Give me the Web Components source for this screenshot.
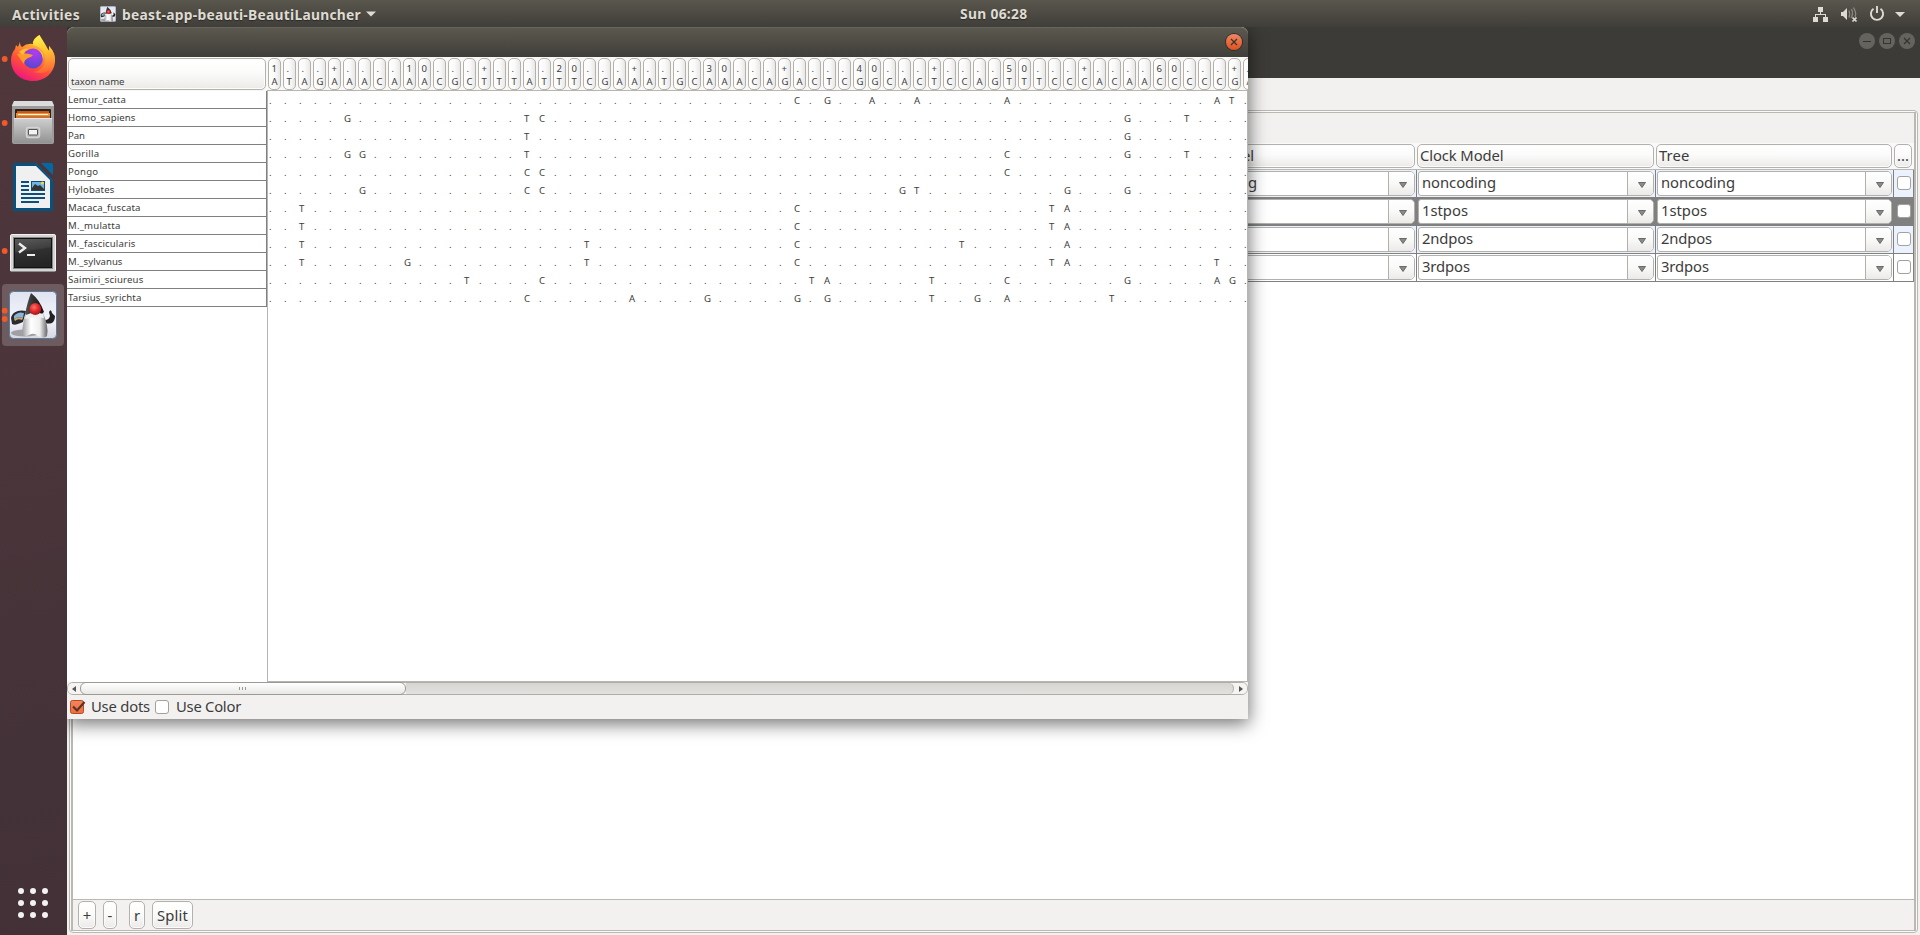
<!DOCTYPE html>
<html lang="en">
<head>
<meta charset="utf-8">
<title>BEAUti</title>
<style>
html,body{margin:0;height:100%;overflow:hidden}
body{font-family:"Noto Sans","Open Sans",sans-serif;color:#3c3c3c;background:#3c3b37}
</style>
</head>
<body>
<desktop-shell></desktop-shell>
<script>
function define(name, html, setup){
  const t=document.createElement('template'); t.innerHTML=html;
  customElements.define(name, class extends HTMLElement{
    constructor(){super(); this.attachShadow({mode:'open'});}
    connectedCallback(){
      if(this.shadowRoot.childNodes.length) return;
      const c=t.content.cloneNode(true);
      if(setup) setup(this,c);
      this.shadowRoot.append(c);
    }
  });
}

/* A label whose tracking is adjusted so the text spans w pixels. */
customElements.define('ui-label', class extends HTMLElement{
  connectedCallback(){
    if(this.shadowRoot) return;
    const r=this.attachShadow({mode:'open'});
    r.innerHTML='<style>:host{display:inline-block;white-space:pre}</style><span><slot></slot></span>';
    const s=r.querySelector('span'), w=+this.getAttribute('w'), n=this.textContent.length;
    if(w){ const nat=s.getBoundingClientRect().width; s.style.letterSpacing=((w-nat)/n).toFixed(3)+'px'; }
  }
});

define('duke-icon', `<style>:host{display:block}svg{display:block;width:100%;height:100%}</style>
<svg viewBox="0 0 48 48">
<defs><linearGradient id="b" x2="0" y2="1"><stop stop-color="#dfe2f0"/><stop offset=".6" stop-color="#f4f5fb"/><stop offset="1" stop-color="#d5d6e2"/></linearGradient>
<linearGradient id="w" x2="1"><stop stop-color="#999"/><stop offset=".35" stop-color="#fff"/><stop offset=".7" stop-color="#eee"/><stop offset="1" stop-color="#666"/></linearGradient>
<radialGradient id="n" cx=".4" cy=".35" r=".75"><stop stop-color="#ff7068"/><stop offset=".5" stop-color="#e0282b"/><stop offset="1" stop-color="#9c1215"/></radialGradient>
<linearGradient id="k" x2="1"><stop stop-color="#555"/><stop offset=".4" stop-color="#333"/><stop offset="1" stop-color="#111"/></linearGradient></defs>
<rect x=".5" y=".5" width="47" height="47" rx="4" fill="url(#b)" stroke="#587d9c"/>
<ellipse cx="16" cy="42" rx="14" ry="3.500" fill="#777" opacity=".6"/>
<path d="M17 20C10 18 3 21 2 27L3 33C7 35 11 32 14 31Z" fill="#2b2b2d"/>
<path d="M5 25Q9 20 15 22L14 27Q9 25 5 28Z" fill="#87b6dc"/><path d="M5 28Q9 25 14 27L13 29Q9 27 6 30Z" fill="#c9a677"/>
<path d="M36 29Q40 29 41 25L40 21Q42 17 43 22L46 25Q46 30 43 32Q39 33 37 32Z" fill="#222"/>
<path d="M17 22Q14 30 13 42Q15 47 20 44Q25 41 29 45Q35 48 38 45Q40 35 34 22Z" fill="url(#w)"/>
<path d="M22 2Q19 9 16 23Q19 25 25 25Q31 25 35 21Q31 9 22 2Z" fill="url(#k)"/>
<path d="M17 24Q25 20 34 23L35 27Q26 25 16 28Z" fill="#efefef"/>
<circle cx="26.300" cy="18" r="5.900" fill="url(#n)"/>
</svg>`);

const dockIcons={
firefox:`<defs><linearGradient id="f" x1=".8" x2=".3" y2="1"><stop stop-color="#fff44f"/><stop offset=".35" stop-color="#ffa030"/><stop offset=".65" stop-color="#ff5138"/><stop offset="1" stop-color="#ee1580"/></linearGradient>
<linearGradient id="f2" x2=".1" y2="1"><stop stop-color="#fff650"/><stop offset=".45" stop-color="#ffc531"/><stop offset="1" stop-color="#ff6a35"/></linearGradient>
<radialGradient id="g" cx=".6" cy=".2" r=".8"><stop stop-color="#b63af0"/><stop offset="1" stop-color="#5548d0"/></radialGradient></defs>
<path d="M20 15Q20 19 22 20Q27 16 33 17Q32 12 39.500 8Q39 14 44 18L49 24L49 19Q56 27 55 35C54 46 45 54 33 54C20 54 11 45 11 33Q11 27 15 22L16 18L18 20Z" fill="url(#f)"/>
<path d="M39.500 8Q33 12 33 18Q46 21 45 34Q44 43 34 45Q50 49 54 36Q57 27 49 19L49 24Q44 15 39.500 8Z" fill="url(#f2)"/>
<circle cx="33" cy="31.500" r="10" fill="url(#g)"/>
<path d="M17 27Q25 25 33 28Q32 30 28 31Q24 33 24 37Q20 32 17 27Z" fill="#ff9a2c"/>
<path d="M23 28Q25 22 30 22Q24 20 19 25Z" fill="#ffbd38"/>
<path d="M36 22Q43 25 43 33Q45 25 36 22Z" fill="#ffdf45"/>`,
files:`<defs><linearGradient id="a" x2="0" y2="1"><stop stop-color="#d0d0d0"/><stop offset="1" stop-color="#929292"/></linearGradient></defs>
<path d="M14 10H52L54 14V51Q54 53 52 53H14Q12 53 12 51V14Z" fill="#9c9c9c"/><path d="M14 10H52L54 15H12Z" fill="#dcdcdc"/>
<rect x="15" y="18" width="36" height="10" rx="1" fill="#2c211b"/><path d="M17 20H49V22H17Z" fill="#c2571f"/><path d="M16 22H50V28H16Z" fill="#e88f3c"/><path d="M18 23.500H48" stroke="#fff3d8"/><path d="M16 25H50V28H16Z" fill="#cf7028"/>
<path d="M14 27H52V52H14Z" fill="url(#a)"/><path d="M14 27.500H52" stroke="#e6e6e6"/>
<rect x="26.500" y="36.500" width="13" height="10" rx="2" fill="#b5b5b5" stroke="#d4d4d4" stroke-width="1.500"/><rect x="28.500" y="38.500" width="9" height="5.500" rx=".5" fill="#f3f3f3" stroke="#555"/>`,
writer:`<path d="M15 8H41L53 20V54Q53 56 51 56H15Q13 56 13 54V10Q13 8 15 8Z" fill="#0b5f94"/>
<path d="M36 8H41L53 20V25Z" fill="#4c353a"/><path d="M41 8H51.500Q53 8 53 10V20Z" fill="#0369a3"/>
<path d="M35 8L53 26V29L50 25L36 11H16V53H50V25L53 28V54Q53 56 51 56H15Q13 56 13 54V10Q13 8 15 8Z" fill="#07517f"/><path d="M16 11H36L50 25V53H16Z" fill="#f0f0f0"/>
<path d="M21 27H29M21 31H29M21 35H29M21 39H45M21 43H45M21 47H39" stroke="#0b4f7c" stroke-width="2"/>
<rect x="31" y="26" width="14" height="10" fill="#0b4f7c"/><rect x="32" y="27" width="12" height="7" fill="#6db5e2"/><path d="M32 35V33L35 29L38 31L40 30L44 34V35Z" fill="#333"/><circle cx="42.500" cy="28" r="1.500" fill="#ffd43b"/>`,
terminal:`<defs><linearGradient id="t" x2=".2" y2="1"><stop stop-color="#5a5a5a"/><stop offset=".45" stop-color="#3f3f3f"/><stop offset=".5" stop-color="#303030"/><stop offset="1" stop-color="#252525"/></linearGradient></defs>
<rect x="10.500" y="15.500" width="45" height="37" rx="1.500" fill="#d4d4d4" stroke="#f1f1f1"/><path d="M11 52.500H55" stroke="#8b8b8b"/><rect x="13.500" y="18.500" width="39" height="31" fill="#111" stroke="#888"/><rect x="15" y="20" width="36" height="28" fill="url(#t)"/>
<path d="M19 24.500L25 29L19 33.500" fill="none" stroke="#eee" stroke-width="2.400"/><path d="M27 36H35" stroke="#eee" stroke-width="2"/>`,
duke:''};

define('dock-item', `<style>:host{display:block;position:relative;width:67px;height:64px;flex:none}
svg,.tile,duke-icon{position:absolute}svg{inset:0}
.tile{left:2px;top:1px;width:62px;height:62px;border-radius:4px;background:rgba(255,255,255,.19);display:none}
duke-icon{left:9px;top:8px;width:48px;height:48px;display:none}
:host([app=duke]) .tile,:host([app=duke]) duke-icon{display:block}</style>
<div class="tile"></div><svg width="67" height="64" viewBox="0 0 67 64"></svg><duke-icon></duke-icon>`,
(el,c)=>{
  const dots=(el.getAttribute('dots')||'').split(' ').filter(Boolean).map(y=>`<circle cx="4.700" cy="${y}" r="2.900" fill="#f0592a"/>`).join('');
  c.querySelector('svg').innerHTML=dockIcons[el.getAttribute('app')]+dots;
});

define('side-dock', `<style>:host{display:flex;flex-direction:column;width:67px;background:linear-gradient(170deg,#50373c 0,#4a353a 45%,#433238 80%,#433137)}
.sp{flex:1}.apps{display:grid;grid-template-columns:repeat(3,6px);gap:6px;padding:0 0 17px 18px}
.apps i{width:6px;height:6px;border-radius:50%;background:#f2f2f2}</style>
<dock-item app="firefox" dots="32"></dock-item><dock-item app="files" dots="32"></dock-item><dock-item app="writer"></dock-item><dock-item app="terminal" dots="32"></dock-item><dock-item app="duke" dots="27.7 36"></dock-item>
<div class="sp"></div><div class="apps"><i></i><i></i><i></i><i></i><i></i><i></i><i></i><i></i><i></i></div>`);

define('top-bar', `<style>:host{display:grid;grid-template-columns:960px auto 1fr;align-items:center;height:27px;box-sizing:border-box;background:linear-gradient(#59564d,#403e39);color:#dfdbd2;font-weight:700;font-size:13.800px;line-height:28px;text-shadow:0 1px 1px rgba(0,0,0,.4)}
.l{display:flex;align-items:center;padding-left:12px}duke-icon{width:16px;height:16px;margin:0 6px 0 20px}
.l svg{margin-left:5px}.r{display:flex;justify-content:flex-end}svg{display:block}.l ui-label,.c ui-label{height:27px}</style>
<div class="l"><ui-label w="68">Activities</ui-label><duke-icon></duke-icon><ui-label w="239">beast-app-beauti-BeautiLauncher</ui-label><svg width="10" height="6"><path d="M0 .5H10L5 5.500Z" fill="#dfdbd2"/></svg></div>
<div class="c"><ui-label w="67.500">Sun 06:28</ui-label></div>
<div class="r"><svg width="120" height="27" fill="#dfdbd2"><g transform="translate(-1800 0)">
<path d="M1818 6h5v5h-5zM1813 16h5v5h-5zM1823 16h5v5h-5zM1820 11h1v2h5v3h-1v-2h-9v2h-1v-3h5z"/>
<path d="M1841 11H1843L1847 7V19L1843 15H1841Z"/><path d="M1849 9.500Q1850.500 13 1849 16.500M1851.500 8Q1853.800 13 1851 17M1853.500 6.500Q1856.800 12 1855 16" fill="none" stroke="#8c8980" stroke-width="1.300"/><path d="M1852.500 16.500L1856.500 20.500M1856.500 16.500L1852.500 20.500" stroke="#dfdbd2" stroke-width="1.700"/>
<path d="M1873.500 7.800A6.100 6.100 0 1 0 1880.500 7.800M1877 5V12" fill="none" stroke="#dfdbd2" stroke-width="1.900"/>
<path d="M1895 11H1905L1900 16Z"/></g></svg></div>`);

define('win-button', `<style>:host{display:block;width:16px;height:16px;border-radius:50%;background:#65635d}
:host([hot]){background:linear-gradient(#f08763,#e0511f);box-shadow:0 0 0 1px #33312d}svg{display:block}</style><svg width="16" height="16" fill="none" stroke="#35342f"></svg>`,
(el,c)=>{c.querySelector('svg').innerHTML={min:'<path d="M4 8.500H12"/>',max:'<rect x="4.500" y="5.500" width="7" height="5"/>',close:'<path d="M5 5L11 11M11 5L5 11" stroke-width="1.200"/>'}[el.getAttribute('kind')];});

define('check-box', `<style>:host{display:block;width:14px;height:14px}svg{display:block;overflow:visible}</style><svg width="14" height="14"></svg>`,
(el,c)=>{const on=el.hasAttribute('checked');
c.querySelector('svg').innerHTML=on?'<defs><linearGradient id="o" x2="0" y2="1"><stop stop-color="#f4855f"/><stop offset="1" stop-color="#ee6c3f"/></linearGradient></defs><rect x=".5" y=".5" width="13" height="13" rx="2" fill="url(#o)" stroke="#b94a1f"/><path d="M3 6.500L7 10.500L14.500 2" fill="none" stroke="#5b3325" stroke-width="2.200"/>':'<rect x=".5" y=".5" width="13" height="13" rx="2.500" fill="#fff" stroke="#a3a19c"/>';});

define('push-button', `<style>:host{display:flex;box-sizing:border-box;align-items:center;border:1px solid #b3b1ab;border-radius:5px;background:linear-gradient(#fff,#fbfbfa 45%,#ebeae8);box-shadow:inset 0 0 0 1px #fcfcfc}</style><slot></slot>`);

define('combo-box', `<style>:host{display:flex;box-sizing:border-box;height:25px;border:1px solid #b1b0aa;border-radius:3px 5px 5px 3px;background:#fff}
.t{flex:1;padding-left:3px;line-height:21px;font-size:14.800px;overflow:hidden}
.b{width:24px;border-left:1px solid #b1b0aa;background:linear-gradient(#fff,#f9f9f8 50%,#ebeae8);border-radius:0 4px 4px 0;display:flex;align-items:center;justify-content:center;padding-left:1px;box-sizing:content-box}
svg{margin:2px 0 0 1px}</style><div class="t"><slot></slot></div><div class="b"><svg width="8" height="6"><path d="M.5 .5H7.500L4 5.500Z" fill="#8a8a8a" stroke="#6a6a6a"/></svg></div>`);

define('partition-row', `<style>:host{display:grid;grid-template-columns:239px 239px 238px 20px;height:28px;box-sizing:border-box;border-bottom:1px solid #808080;background:var(--bg)}
.c{border-right:1px solid #808080;padding:1px 1px 0 1px;box-sizing:border-box}.k{padding:6px 0 0 3px;border-right:1px solid #808080}</style>
<div class="c"><combo-box></combo-box></div><div class="c"><combo-box></combo-box></div><div class="c"><combo-box></combo-box></div><div class="k"><check-box></check-box></div>`,
(el,c)=>{c.querySelectorAll('combo-box').forEach(b=>b.innerHTML=`<ui-label w="${el.getAttribute('w')}">${el.getAttribute('name')}</ui-label>`);});

define('main-window', `<style>:host{display:flex;flex-direction:column;background:#f2f1f0}
.bar{height:51px;flex:none;box-sizing:border-box;background:#3c3b37;display:flex;justify-content:flex-end;gap:4px;padding:6px 5px 0 0}
.body{flex:1;margin:32px 2px 2px 2px;border:1px solid #bbb8b3;border-radius:4px;padding:1px;display:flex;background:#fafafa}
.in{flex:1;border:1px solid #bbb8b3;border-left-width:2px;border-right-width:2px;display:flex;flex-direction:column;background:#f2f1f0}
.hd{margin-top:30px;height:27px;box-sizing:border-box;background:#faf9f9;border-bottom:1px solid #b9b7b2;display:grid;grid-template-columns:236px 237px 236px 18px;gap:2px;justify-content:end;padding:1px 2px 1px 0;font-size:14.800px}
.hd push-button{height:24px;padding:0 0 2px 2px}
.tb{flex:1;background:#fff;border-bottom:1px solid #bbb8b3;display:flex;flex-direction:column;align-items:flex-end}
.ft{height:30px;display:flex;padding:1px 0 0 5px;font-size:14.800px;box-sizing:border-box}.ft push-button{height:28px;justify-content:center}</style>
<div class="bar"><win-button kind="min"></win-button><win-button kind="max"></win-button><win-button kind="close"></win-button></div>
<div class="body"><div class="in"><div class="hd"><push-button><ui-label w="72">Site Model</ui-label></push-button><push-button><ui-label w="83.500">Clock Model</ui-label></push-button><push-button><ui-label w="30.500">Tree</ui-label></push-button><push-button><ui-label w="12">...</ui-label></push-button></div>
<div class="tb"><partition-row name="noncoding" w="74" style="--bg:#ebf1fd"></partition-row><partition-row name="1stpos" w="46" style="--bg:#808080"></partition-row><partition-row name="2ndpos" w="51" style="--bg:#ebf1fd"></partition-row><partition-row name="3rdpos" w="48" style="--bg:#fff"></partition-row></div>
<div class="ft"><push-button style="width:18px">+</push-button><push-button style="width:14px;margin-left:7px">-</push-button><push-button style="width:16px;margin-left:12px">r</push-button><push-button style="width:41px;margin-left:7px"><ui-label w="31">Split</ui-label></push-button></div></div></div>`);

const SITES='ATAGAAACAAACGCTTTATTTCGAAATGCAAACAGACTCGGCACTCCAGTTTCCCACAACCCCCGA';
const TAXA=[
['Lemur_catta',58,'35C 37G 40A 43A 49A 63A 64T'],
['Homo_sapiens',67.500,'5G 17T 18C 57G 61T'],
['Pan',16.700,'17T 57G'],
['Gorilla',31.500,'5G 6G 17T 49C 57G 61T'],
['Pongo',30.300,'17C 18C 49C'],
['Hylobates',46.500,'6G 17C 18C 42G 43T 53G 57G'],
['Macaca_fuscata',72.500,'2T 35C 52T 53A'],
['M._mulatta',52.500,'2T 35C 52T 53A'],
['M._fascicularis',67.500,'2T 21T 35C 46T 53A'],
['M._sylvanus',54.500,'2T 9G 21T 35C 52T 53A 63T'],
['Saimiri_sciureus',75.500,'13T 18C 36T 37A 44T 49C 57G 63A 64G'],
['Tarsius_syrichta',73.500,'17C 24A 29G 35G 37G 44T 47G 49A 56T']];

define('site-header', `<style>:host{display:flex;gap:2px}
div{width:13px;height:32px;flex:none;box-sizing:border-box;border:1px solid #b3b1ab;border-radius:5px;background:linear-gradient(90deg,#fff,#fafafa 50%,#e9e8e6);font-size:9.500px;line-height:13px;padding:3px 0 0 2.500px;white-space:pre}</style>`,
(el,c)=>{[...SITES].forEach((s,i)=>{const p=i+1,d=document.createElement('div');
  d.textContent=(p===1?'1':p%10===0?String(p/10):i&&i%10===0?'0':p%5===0?'+':'.')+'\n'+s;c.append(d);});});

define('site-row', `<style>:host{display:grid;grid-template-columns:repeat(66,15px);height:18px;font-size:9.600px;line-height:18px}span{padding-left:1px}</style>`,
(el,c)=>{const m={};el.getAttribute('diff').split(' ').forEach(x=>m[parseInt(x)]=x.slice(-1));
  for(let i=0;i<66;i++){const s=document.createElement('span');s.textContent=m[i]||'.';c.append(s);}});

define('alignment-view', `<style>:host{display:grid;grid-template-columns:200px 1fr;grid-template-rows:34px 1fr;background:#fff;overflow:hidden;font-size:9.600px}
.h1,.h2{background:#f9f8f7;padding-top:1px;box-sizing:border-box;overflow:hidden}.h1{padding-left:1px}.h1 push-button{width:198px;height:32px;align-items:flex-end;padding:0 0 0 2px}
.h1 ui-label{line-height:14px}
.h2{padding-left:1px;border-bottom:1px solid #b7b5b0}
.names ui-label{display:block}.n{height:18px;box-sizing:border-box;border-bottom:1px solid #808080;border-right:1px solid #808080;line-height:17px;padding-left:1px}
.sites{border:1px solid #b7b5b0;border-top:0;overflow:hidden;padding-top:1px}</style>
<div class="h1"><push-button><ui-label w="53.500">taxon name</ui-label></push-button></div><div class="h2"><site-header></site-header></div><div class="names"></div><div class="sites"></div>`,
(el,c)=>{c.querySelector('.names').innerHTML=TAXA.map(t=>`<div class="n"><ui-label w="${t[1]}">${t[0]}</ui-label></div>`).join('');
c.querySelector('.sites').innerHTML=TAXA.map(t=>`<site-row diff="${t[2]}"></site-row>`).join('');});

define('scroll-bar', `<style>:host{display:flex;box-sizing:border-box;height:13px;border:1px solid #b0aea8;border-radius:6px;background:linear-gradient(#d6d5d2,#e2e1df)}
.a{width:12px;display:flex;align-items:center;justify-content:center;background:#f5f4f3;border-radius:5px 0 0 5px}.a.r{border-radius:0 5px 5px 0;width:13px}
.t{box-sizing:border-box;width:326px;margin:-1px 0;border:1px solid #9c9a94;border-radius:6px;background:linear-gradient(#fff,#f4f4f3 50%,#e8e7e5);display:flex;gap:2px;align-items:center;justify-content:center;padding-right:1px}.t i{width:1px;height:3px;background:#999}
.s{flex:1;border-right:1px solid #b0aea8;border-radius:0 6px 6px 0;background:linear-gradient(#d6d5d2,#e2e1df)}:host{background:#f5f4f3}</style>
<div class="a"><svg width="4" height="6"><path d="M4 0V6L0 3Z" fill="#555"/></svg></div><div class="t"><i></i><i></i><i></i></div><div class="s"></div><div class="a r"><svg width="4" height="6"><path d="M0 0V6L4 3Z" fill="#555"/></svg></div>`);

define('alignment-dialog', `<style>:host{display:flex;flex-direction:column;background:#f2f1f0;border-radius:7px 7px 0 0;box-shadow:0 4px 18px 1px rgba(0,0,0,.55)}
.bar{height:30px;flex:none;box-sizing:border-box;border-radius:7px 7px 0 0;background:linear-gradient(#5b584f,#403e39);border-top:1px solid #67645b;display:flex;justify-content:flex-end;padding:6px 6px 0 0}
alignment-view{height:625px}
.opt{height:24px;display:flex;align-items:flex-start;font-size:14.800px;line-height:22px}check-box{margin-top:5px}</style>
<div class="bar"><win-button hot kind="close"></win-button></div><alignment-view></alignment-view><scroll-bar></scroll-bar>
<div class="opt"><check-box checked style="margin-left:3px"></check-box><ui-label w="59" style="margin-left:7px">Use dots</ui-label><check-box style="margin-left:5px"></check-box><ui-label w="65" style="margin-left:7px">Use Color</ui-label></div>`);

define('desktop-shell', `<style>:host{display:grid;width:1920px;height:935px;grid-template:27px 1fr/67px 1fr;position:relative;overflow:hidden}
top-bar{grid-column:1/3;z-index:3}side-dock{z-index:3}
alignment-dialog{position:absolute;left:67px;top:27px;width:1181px;height:692px;z-index:2}</style>
<top-bar></top-bar><side-dock></side-dock><main-window></main-window><alignment-dialog></alignment-dialog>`);
</script>
</body>
</html>
